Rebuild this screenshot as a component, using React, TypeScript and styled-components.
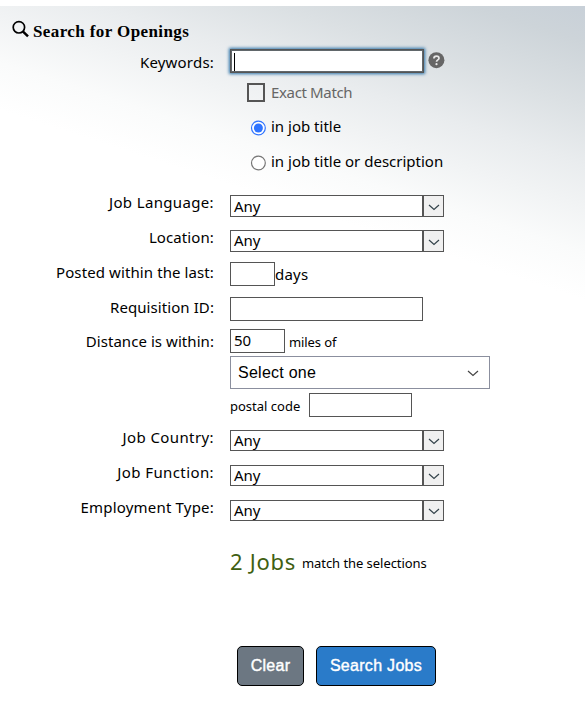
import styled, { createGlobalStyle } from "styled-components";

const GlobalStyle = createGlobalStyle`
  * {
    box-sizing: border-box;
  }
  body {
    margin: 0;
    background: #fff;
    color: #000;
    font-family: "Noto Sans", "Open Sans", sans-serif;
  }
`;

const Page = styled.div`
  height: 704px;
  margin-top: 6px;
  padding-top: 13px;
  background: linear-gradient(
    198deg,
    #c8d0d8 0px,
    #cdd4d9 35px,
    #dbe0e3 95px,
    #e9ecee 150px,
    #f1f3f4 190px,
    #fafbfb 235px,
    #ffffff 280px
  );
`;

const Header = styled.header`
  display: flex;
  height: 24px;
  padding-left: 12px;
  gap: 4px;
`;

const Title = styled.h1`
  margin: 0;
  font: bold 17px/25px "Liberation Serif", serif;
  letter-spacing: 0.4px;
`;

const Form = styled.form`
  display: flex;
  flex-direction: column;
`;

const Row = styled.div<{ $height: number }>`
  display: grid;
  grid-template-columns: 214px 1fr;
  column-gap: 16px;
  align-items: start;
  height: ${(props) => props.$height}px;
`;

const Label = styled.label<{ $top?: number; $spacing?: number }>`
  padding-top: ${(props) => props.$top ?? 0}px;
  font-size: 15px;
  line-height: 14px;
  text-align: right;
  white-space: nowrap;
  letter-spacing: ${(props) => props.$spacing ?? 0}px;
`;

const Field = styled.div<{ $top?: number }>`
  grid-column: 2;
  display: flex;
  align-items: flex-start;
  padding-top: ${(props) => props.$top ?? 0}px;
`;

const Box = styled.div<{ $width: number }>`
  width: ${(props) => props.$width}px;
  height: 24px;
  padding-left: 3px;
  border: 1px solid #555;
  background: #fff;
  font-size: 15px;
  line-height: 20px;
`;

const FocusedBox = styled(Box)`
  padding-top: 3px;
  box-shadow: 0 0 3px 1px #2f74a8, inset 0 0 0 1px #61676b;
`;

const Caret = styled.div`
  width: 1px;
  height: 18px;
  background: #000;
`;

const HelpIcon = styled.svg`
  margin: 3px 0 0 4px;
`;

const Options = styled.div`
  display: flex;
  flex-direction: column;
  height: 112px;
  padding-left: 247px;
`;

const Option = styled.label<{ $height: number; $spacing?: number; $muted?: boolean }>`
  display: grid;
  grid-template-columns: 18px 1fr;
  column-gap: 6px;
  height: ${(props) => props.$height}px;
  color: ${(props) => (props.$muted ? "#666" : "#000")};
  font-size: 15px;
  line-height: 18px;
  letter-spacing: ${(props) => props.$spacing ?? 0}px;
`;

const CheckBox = styled.span`
  width: 18px;
  height: 19px;
  border: 2px solid #555;
`;

const RadioIcon = styled.svg`
  overflow: visible;
`;

const Select = styled.div<{ $height: number }>`
  display: grid;
  grid-template-columns: 193px 21px;
  grid-template-rows: 100%;
  height: ${(props) => props.$height}px;
`;

const SelectValue = styled.div<{ $line: number }>`
  padding-left: 3px;
  border: 1px solid #555;
  background: #fff;
  font-size: 15px;
  line-height: ${(props) => props.$line}px;
  letter-spacing: -0.1px;
`;

const SelectArrow = styled.div`
  display: flex;
  align-items: center;
  justify-content: center;
  padding-top: 2px;
  border: 1px solid #555;
  background: #f0f0f0;
`;

const WideSelect = styled.div`
  display: flex;
  align-items: center;
  justify-content: space-between;
  width: 260px;
  height: 33px;
  padding: 0 10px 0 7px;
  border: 1px solid #8b8f9e;
  background: #fff;
  font: 16px/31px "Liberation Sans", sans-serif;
  letter-spacing: 0.25px;

  svg {
    margin-top: 2px;
  }
`;

const Note = styled.span<{ $top: number; $left?: number; $right?: number; $size?: number; $spacing?: number }>`
  padding: ${(props) => props.$top}px ${(props) => props.$right ?? 0}px 0
    ${(props) => props.$left ?? 0}px;
  font-size: ${(props) => props.$size ?? 13}px;
  line-height: 18px;
  white-space: nowrap;
  letter-spacing: ${(props) => props.$spacing ?? 0}px;
`;

const Result = styled.div`
  display: flex;
  align-items: flex-start;
  height: 111px;
  padding: 11px 0 0 230px;
`;

const Count = styled.span`
  color: #3f5f12;
  font-size: 22px;
  line-height: 30px;
  letter-spacing: 0.7px;
`;

const Buttons = styled.div`
  display: flex;
  gap: 12px;
  padding-left: 237px;
`;

const Button = styled.button<{ $width: number; $color: string }>`
  width: ${(props) => props.$width}px;
  height: 40px;
  padding: 0;
  border: 1px solid #000;
  border-radius: 5px;
  background: ${(props) => props.$color};
  color: #fff;
  font: 16px/36px "Liberation Sans", sans-serif;
  letter-spacing: 0.3px;
  -webkit-text-stroke: 0.4px #fff;
`;

function Chevron({ color = "#33424a" }: { color?: string }) {
  return (
    <svg width="12" height="7" viewBox="0 0 12 7" fill="none">
      <path d="M1 1L6 5.4L11 1" stroke={color} strokeWidth="1.2" />
    </svg>
  );
}

function Radio({ checked }: { checked?: boolean }) {
  const color = checked ? "#2f74ff" : "#767676";
  return (
    <RadioIcon width="18" height="20" viewBox="0 0 18 20">
      <circle cx="11.4" cy="11" r="6.9" fill="#fff" stroke={color} strokeWidth="1.2" />
      {checked && <circle cx="11.4" cy="11" r="4.5" fill={color} />}
    </RadioIcon>
  );
}

interface ISelectRow {
  label: string;
  rowHeight: number;
  height: number;
  spacing: number;
  line?: number;
}

function SelectRow({ label, rowHeight, height, spacing, line = 18 }: ISelectRow) {
  return (
    <Row $height={rowHeight}>
      <Label $spacing={spacing}>{label}</Label>
      <Field>
        <Select $height={height}>
          <SelectValue $line={line}>Any</SelectValue>
          <SelectArrow>
            <Chevron />
          </SelectArrow>
        </Select>
      </Field>
    </Row>
  );
}

function App() {
  return (
    <>
      <GlobalStyle />
      <Page>
        <Header>
          <svg width="17" height="20" viewBox="0 0 17 20" fill="none" stroke="#000">
            <circle cx="6.9" cy="8.3" r="5.7" strokeWidth="1.7" />
            <path d="M10.8 12.4L16 17.4" strokeWidth="2.5" />
          </svg>
          <Title>Search for Openings</Title>
        </Header>
        <Form>
          <Row $height={40}>
            <Label $top={12} $spacing={0.2}>
              Keywords:
            </Label>
            <Field $top={6}>
              <FocusedBox $width={194}>
                <Caret />
              </FocusedBox>
              <HelpIcon width="17" height="17" viewBox="0 0 17 17">
                <circle cx="8.4" cy="8.2" r="8" fill="#666" />
                <path
                  d="M5.9 6.5C5.9 4.9 7 4.1 8.5 4.1S11 4.9 11 6.2C11 7.9 8.5 7.9 8.5 9.8"
                  fill="none"
                  stroke="#e8e8e8"
                  strokeWidth="1.7"
                />
                <circle cx="8.5" cy="12.2" r="1.1" fill="#e8e8e8" />
              </HelpIcon>
            </Field>
          </Row>
          <Options>
            <Option $height={34} $spacing={-0.35} $muted>
              <CheckBox />
              Exact Match
            </Option>
            <Option $height={35}>
              <Radio checked />
              in job title
            </Option>
            <Option $height={35}>
              <Radio />
              in job title or description
            </Option>
          </Options>
          <SelectRow label="Job Language:" rowHeight={35} height={22} spacing={0.35} line={20} />
          <SelectRow label="Location:" rowHeight={32} height={22} spacing={0.1} />
          <Row $height={35}>
            <Label $top={3} $spacing={0.1}>
              Posted within the last:
            </Label>
            <Field>
              <Box $width={45} />
              <Note $top={3} $size={15} $spacing={0.2}>
                days
              </Note>
            </Field>
          </Row>
          <Row $height={32}>
            <Label $top={3} $spacing={0.08}>
              Requisition ID:
            </Label>
            <Field>
              <Box $width={193} />
            </Field>
          </Row>
          <Row $height={27}>
            <Label $top={5} $spacing={0.06}>
              Distance is within:
            </Label>
            <Field>
              <Box $width={55}>50</Box>
              <Note $top={4} $left={4} $spacing={-0.1}>
                miles of
              </Note>
            </Field>
          </Row>
          <Row $height={37}>
            <Field>
              <WideSelect>
                Select one
                <Chevron color="#444" />
              </WideSelect>
            </Field>
          </Row>
          <Row $height={37}>
            <Field>
              <Note $top={4} $right={9}>
                postal code
              </Note>
              <Box $width={103} />
            </Field>
          </Row>
          <SelectRow label="Job Country:" rowHeight={35} height={21} spacing={0.4} />
          <SelectRow label="Job Function:" rowHeight={35} height={21} spacing={0.4} />
          <SelectRow label="Employment Type:" rowHeight={35} height={21} spacing={0.2} />
          <Result>
            <Count>2 Jobs</Count>
            <Note $top={8} $left={6} $spacing={-0.05}>
              match the selections
            </Note>
          </Result>
          <Buttons>
            <Button type="button" $width={67} $color="#6c7782">
              Clear
            </Button>
            <Button type="button" $width={120} $color="#2a7bc9">
              Search Jobs
            </Button>
          </Buttons>
        </Form>
      </Page>
    </>
  );
}

export default App;
